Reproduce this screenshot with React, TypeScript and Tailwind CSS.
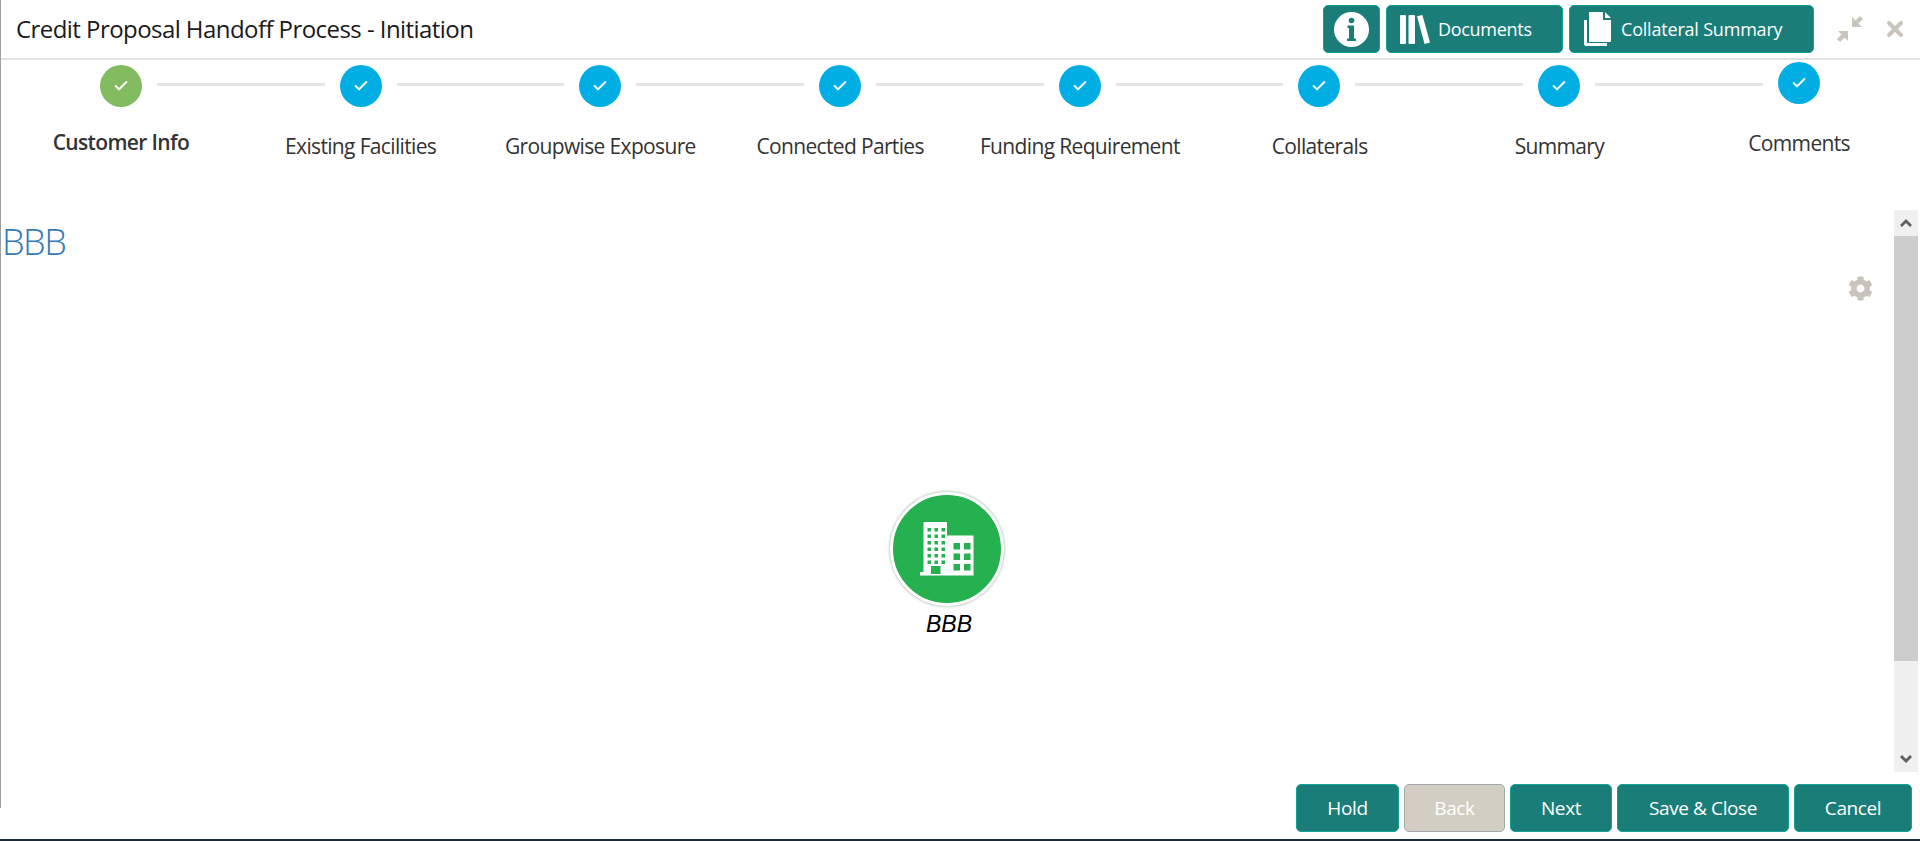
import { Check, X } from 'lucide-react'
import { FaCog } from 'react-icons/fa'

const SANS = "font-['Open_Sans',sans-serif]"

const STEPS = [
  { label: 'Existing Facilities', circle: 'mt-[5px]', text: 'mt-[24px]' },
  { label: 'Groupwise Exposure', circle: 'mt-[5px]', text: 'mt-[24px]' },
  { label: 'Connected Parties', circle: 'mt-[5px]', text: 'mt-[24px]' },
  { label: 'Funding Requirement', circle: 'mt-[5px]', text: 'mt-[24px]' },
  { label: 'Collaterals', circle: 'mt-[5px]', text: 'mt-[24px]' },
  { label: 'Summary', circle: 'mt-[5px]', text: 'mt-[24px]' },
  { label: 'Comments', circle: 'mt-[2px]', text: 'mt-[21px]' },
]

function InfoIcon() {
  return (
    <svg viewBox="0 0 35 35" className="w-[35px] h-[35px]">
      <circle cx="17.500" cy="17.500" r="17.500" fill="white" />
      <circle cx="17.500" cy="8.500" r="2.800" fill="#1b7d78" />
      <path d="M13.500 13.500h6.500v13h2v2.500h-9v-2.500h2v-10.500h-1.500Z" fill="#1b7d78" />
    </svg>
  )
}

function BooksIcon() {
  return (
    <svg viewBox="0 0 30 29" className="w-[30px] h-[29px] fill-white">
      <rect x="0" y="0" width="6" height="29" rx="1" />
      <rect x="8.500" y="0" width="6.500" height="29" rx="1" />
      <path d="M17 1.200 22.400 0 30 27.600 24.600 29Z" />
    </svg>
  )
}

function PagesIcon() {
  return (
    <svg viewBox="0 0 27 34" className="w-[27px] h-[34px]">
      <path d="M0 8h3v23h20v3H2a2 2 0 0 1-2-2Z" fill="white" />
      <path d="M5 0h14v8h8v21a1 1 0 0 1-1 1H5Z" fill="white" />
      <path d="M21 0l6 6h-6Z" fill="white" />
    </svg>
  )
}

function CompressIcon() {
  return (
    <svg viewBox="0 0 26 26" className="w-[26px] h-[26px] fill-[#c9c5bd]">
      <path d="M15 1v10h10l-3.600-3.600L26 3 23 0l-4.600 4.600Z" />
      <path d="M11 25V15H1l3.600 3.600L0 23l3 3 4.600-4.600Z" />
    </svg>
  )
}

function BuildingIcon() {
  const tall = [0, 1, 2, 3, 4, 5]
  const wide = [0, 1, 2]
  return (
    <svg viewBox="0 0 54 54" className="w-[54px] h-[54px]">
      <path d="M3.500 0h23.500v13.500h26.500v40H0v-3.500h3.500Z" fill="white" />
      {tall.map(r => [0, 1, 2].map(c => (
        <rect key={`${r}-${c}`} x={7.500 + c * 7} y={6 + r * 6.500} width="3.500" height="3.500" fill="#25b150" />
      )))}
      {wide.map(r => [0, 1].map(c => (
        <rect key={`${r}-${c}`} x={33.500 + c * 10.500} y={21 + r * 10.500} width="6.500" height="6.500" fill="#25b150" />
      )))}
      <rect x="11" y="44" width="9.500" height="8" fill="#25b150" />
    </svg>
  )
}

function FooterButton({ children, width, disabled }: { children: string; width: string; disabled?: boolean }) {
  return (
    <button
      type="button"
      className={`${width} h-[48px] rounded-[5px] border text-[19px] tracking-[-0.4px] text-white ${disabled ? 'bg-[#d3cec3] border-[#a3a8a8]' : 'bg-[#1b7d78] border-[#10a394]'}`}
    >
      {children}
    </button>
  )
}

export default function App() {
  return (
    <div className={`relative flex flex-col h-[841px] w-full bg-white overflow-hidden ${SANS}`}>
      <div className="absolute left-0 top-0 w-px h-[808px] bg-[#a0a0a0]" />

      {/* cabeçalho */}
      <header className="flex items-center h-[60px] shrink-0 border-b-2 border-[#e2e2e2] pl-4">
        <h1 className="text-[24px] tracking-[-0.56px] text-[#1a1a1a]">Credit Proposal Handoff Process - Initiation</h1>
        <div className="ml-auto flex items-center h-[48px] gap-[6px]">
          <button type="button" className="flex items-center justify-center w-[57px] h-[48px] rounded-[5px] border border-[#10a394] bg-[#1b7d78]">
            <InfoIcon />
          </button>
          <button type="button" className="flex items-center w-[177px] h-[48px] pl-[13px] gap-[8px] rounded-[5px] border border-[#10a394] bg-[#1b7d78] text-[18px] tracking-[-0.3px] text-white">
            <BooksIcon />
            Documents
          </button>
          <button type="button" className="flex items-center w-[245px] h-[48px] pl-[14px] gap-[10px] rounded-[5px] border border-[#10a394] bg-[#1b7d78] text-[18px] tracking-[-0.2px] text-white">
            <PagesIcon />
            Collateral Summary
          </button>
          <div className="flex items-center ml-[17px] mr-[13px] gap-[20px]">
            <CompressIcon />
            <X className="w-[24px] h-[24px] text-[#c9c5bd]" strokeWidth={4} />
          </div>
        </div>
      </header>

      {/* etapas */}
      <div className="h-[150px] shrink-0">
        <div className="flex items-start pl-[100px]">
          <div className="flex items-center justify-center w-[42px] h-[42px] mt-[5px] rounded-full bg-[#83bb61] shrink-0">
            <Check className="w-[16px] h-[16px] text-white" strokeWidth={3} />
          </div>
          {STEPS.map(s => (
            <div key={s.label} className="flex items-start shrink-0">
              <div className="w-[167.700px] h-[3px] mt-[23px] ml-[15px] mr-[15px] bg-[#e4e4e4]" />
              <div className={`flex items-center justify-center w-[42px] h-[42px] rounded-full bg-[#00aee4] ${s.circle}`}>
                <Check className="w-[16px] h-[16px] text-white" strokeWidth={3} />
              </div>
            </div>
          ))}
        </div>
        <div className="grid grid-cols-8 w-[1918px] ml-px text-center text-[21px] tracking-[-0.65px] text-[#333]">
          <div className="mt-[20px] font-semibold">Customer Info</div>
          {STEPS.map(s => (
            <div key={s.label} className={s.text}>{s.label}</div>
          ))}
        </div>
      </div>

      {/* conteúdo */}
      <div className="flex flex-1 min-h-0">
        <main className="relative flex-1">
          <h2 className="pl-[2px] pt-[7px] text-[36px] leading-[50px] tracking-[-1.500px] font-light text-[#337ab7]">BBB</h2>
          <FaCog className="absolute right-[21px] top-[66px] w-[25px] h-[25px] text-[#c8c4bc]" />
          <div className="absolute left-[889px] top-[282px] flex flex-col items-center w-[116px]">
            <div className="flex items-center justify-center w-[114px] h-[114px] rounded-full bg-[#25b150] border-[3px] border-white shadow-[0_0_3px_rgba(100,140,100,0.8)]">
              <BuildingIcon />
            </div>
            <span className="mt-[1px] pl-[4px] text-[23px] italic text-black font-['Liberation_Sans',sans-serif]">BBB</span>
          </div>
        </main>
        <div className="flex flex-col w-[24px] mr-[2px] shrink-0 bg-[#f0f0f0]">
          <div className="flex items-center justify-center h-[26px]">
            <svg viewBox="0 0 12 8" className="w-[12px] h-[8px] fill-[#606060]"><path d="M6 0l6 6-2 2-4-4-4 4-2-2Z" /></svg>
          </div>
          <div className="h-[425px] bg-[#cdcdcd]" />
          <div className="flex items-center justify-center h-[26px] mt-auto">
            <svg viewBox="0 0 12 8" className="w-[12px] h-[8px] fill-[#606060]"><path d="M6 8l6-6-2-2-4 4-4-4-2 2Z" /></svg>
          </div>
        </div>
      </div>

      {/* rodapé */}
      <footer className="flex justify-end items-start h-[67px] shrink-0 pt-[12px] pr-2 gap-[5px]">
        <FooterButton width="w-[103px]">Hold</FooterButton>
        <FooterButton width="w-[101px]" disabled>Back</FooterButton>
        <FooterButton width="w-[102px]">Next</FooterButton>
        <FooterButton width="w-[172px]">Save &amp; Close</FooterButton>
        <FooterButton width="w-[118px]">Cancel</FooterButton>
      </footer>
      <div className="h-[2px] shrink-0 bg-[#1c2b33]" />
    </div>
  )
}
